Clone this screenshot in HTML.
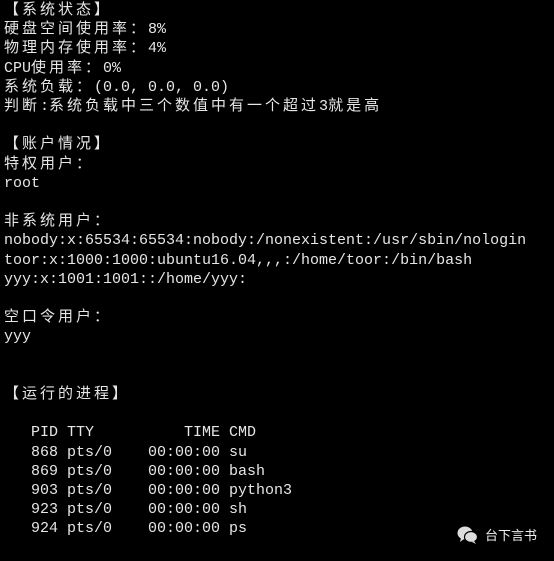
<!DOCTYPE html>
<html><head><meta charset="utf-8"><style>
html,body{margin:0;padding:0;background:#000;width:554px;height:561px;overflow:hidden}
pre{margin:0;position:absolute;left:4px;top:1px;color:#e6e6e6;font-family:"Liberation Mono","Noto Sans CJK SC",monospace;font-size:15px;line-height:19.2px}
b{font-weight:normal;font-family:"Noto Sans CJK SC","WenQuanYi Zen Hei",sans-serif;font-size:15px;letter-spacing:3px;line-height:0}
.wm{position:absolute;left:485px;top:526px;color:#eee;font-family:"Noto Sans CJK SC",sans-serif;font-size:13px;line-height:18px}
svg{position:absolute;left:457px;top:525px}
</style></head><body>
<pre><b>【系统状态】</b>
<b>硬盘空间使用率：</b>8%
<b>物理内存使用率：</b>4%
CPU<b>使用率：</b>0%
<b>系统负载：</b>(0.0, 0.0, 0.0)
<b>判断</b>:<b>系统负载中三个数值中有一个超过</b>3<b>就是高</b>

<b>【账户情况】</b>
<b>特权用户：</b>
root

<b>非系统用户：</b>
nobody:x:65534:65534:nobody:/nonexistent:/usr/sbin/nologin
toor:x:1000:1000:ubuntu16.04,,,:/home/toor:/bin/bash
yyy:x:1001:1001::/home/yyy:

<b>空口令用户：</b>
yyy


<b>【运行的进程】</b>

   PID TTY          TIME CMD
   868 pts/0    00:00:00 su
   869 pts/0    00:00:00 bash
   903 pts/0    00:00:00 python3
   923 pts/0    00:00:00 sh
   924 pts/0    00:00:00 ps</pre>
<svg width="22" height="20" viewBox="0 0 22 20"><ellipse cx="8" cy="8" rx="7.5" ry="6.5" fill="#ddd"/><path d="M4 13 L3 17 L7 14Z" fill="#ddd"/><ellipse cx="14" cy="12" rx="6.5" ry="5.5" fill="#ddd" stroke="#000" stroke-width="1.2"/><path d="M17 16 L19 19 L15 17Z" fill="#ddd"/></svg>
<div class="wm">台下言书</div>
</body></html>
